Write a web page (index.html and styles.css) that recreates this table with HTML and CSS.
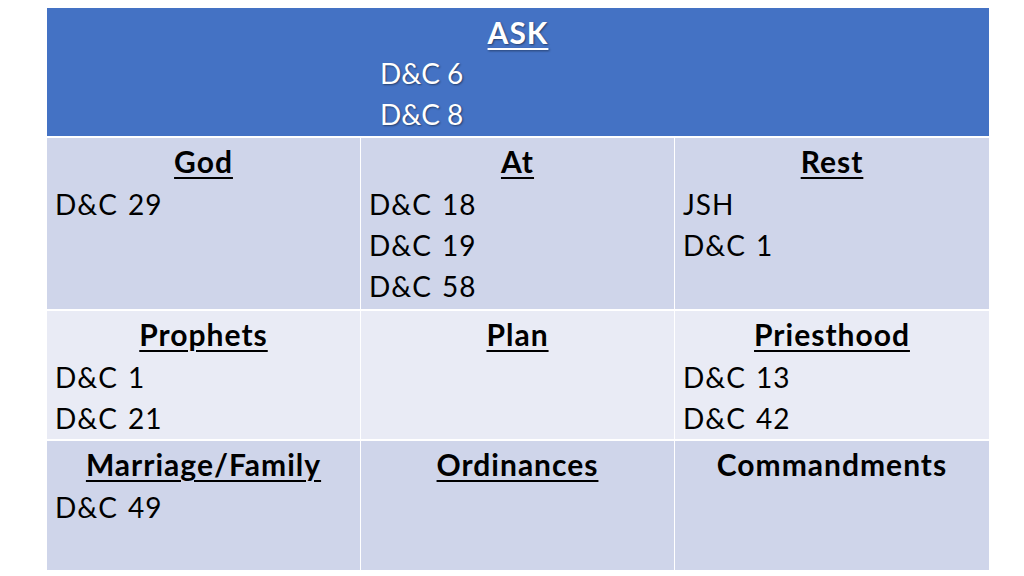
FILE: index.html
```html
<!DOCTYPE html>
<html>
<head>
<meta charset="utf-8">
<link rel="stylesheet" href="styles.css">
</head>
<body>
<div class="table">
  <div class="cell head">
    <div class="title"><u>ASK</u></div>
    <div class="refs-head">
      <div>D&amp;C 6</div>
      <div>D&amp;C 8</div>
    </div>
  </div>

  <div class="cell r1">
    <div class="title"><u>God</u></div>
    <div class="ref">D&amp;C 29</div>
  </div>
  <div class="cell r1">
    <div class="title"><u>At</u></div>
    <div class="ref">D&amp;C 18</div>
    <div class="ref">D&amp;C 19</div>
    <div class="ref">D&amp;C 58</div>
  </div>
  <div class="cell r1">
    <div class="title"><u>Rest</u></div>
    <div class="ref">JSH</div>
    <div class="ref">D&amp;C 1</div>
  </div>

  <div class="cell r2">
    <div class="title"><u>Prophets</u></div>
    <div class="ref">D&amp;C 1</div>
    <div class="ref">D&amp;C 21</div>
  </div>
  <div class="cell r2">
    <div class="title"><u>Plan</u></div>
  </div>
  <div class="cell r2">
    <div class="title"><u>Priesthood</u></div>
    <div class="ref">D&amp;C 13</div>
    <div class="ref">D&amp;C 42</div>
  </div>

  <div class="cell r3">
    <div class="title"><u>Marriage/Family</u></div>
    <div class="ref">D&amp;C 49</div>
  </div>
  <div class="cell r3">
    <div class="title"><u>Ordinances</u></div>
  </div>
  <div class="cell r3">
    <div class="title">Commandments</div>
  </div>
</div>
</body>
</html>
```

FILE: styles.css
```css
html, body {
  margin: 0;
  padding: 0;
  background: #ffffff;
}

body {
  padding: 8px 0 0 47px;
}

.table {
  width: 942px;
  display: grid;
  grid-template-columns: 313px 313px 314px;
  grid-template-rows: 128px 171px 128px 129px;
  column-gap: 1px;
  row-gap: 2px;
  background: #ffffff;
  font-family: Lato, "Liberation Sans", sans-serif;
  font-size: 28px;
  line-height: 41px;
  color: #000000;
}

.cell {
  padding: 5px 8px 0 8px;
}

.head {
  grid-column: 1 / 4;
  background: #4472c4;
  color: #ffffff;
  padding-top: 4px;
  text-shadow: 1px 1px 2px rgba(0, 0, 0, 0.45);
}

.r1, .r3 {
  background: #cfd5ea;
}

.r2 {
  background: #e9ebf5;
}

.title {
  text-align: center;
  font-weight: 700;
  font-size: 30px;
  letter-spacing: 1px;
}

.r1 .title, .r2 .title, .r3 .title {
  line-height: 37px;
  padding-bottom: 4px;
}

.title u {
  text-decoration-thickness: 2px;
  text-underline-offset: 4px;
}

.ref {
  letter-spacing: 1px;
  word-spacing: 2px;
}

.refs-head {
  padding-left: 325px;
}
```
